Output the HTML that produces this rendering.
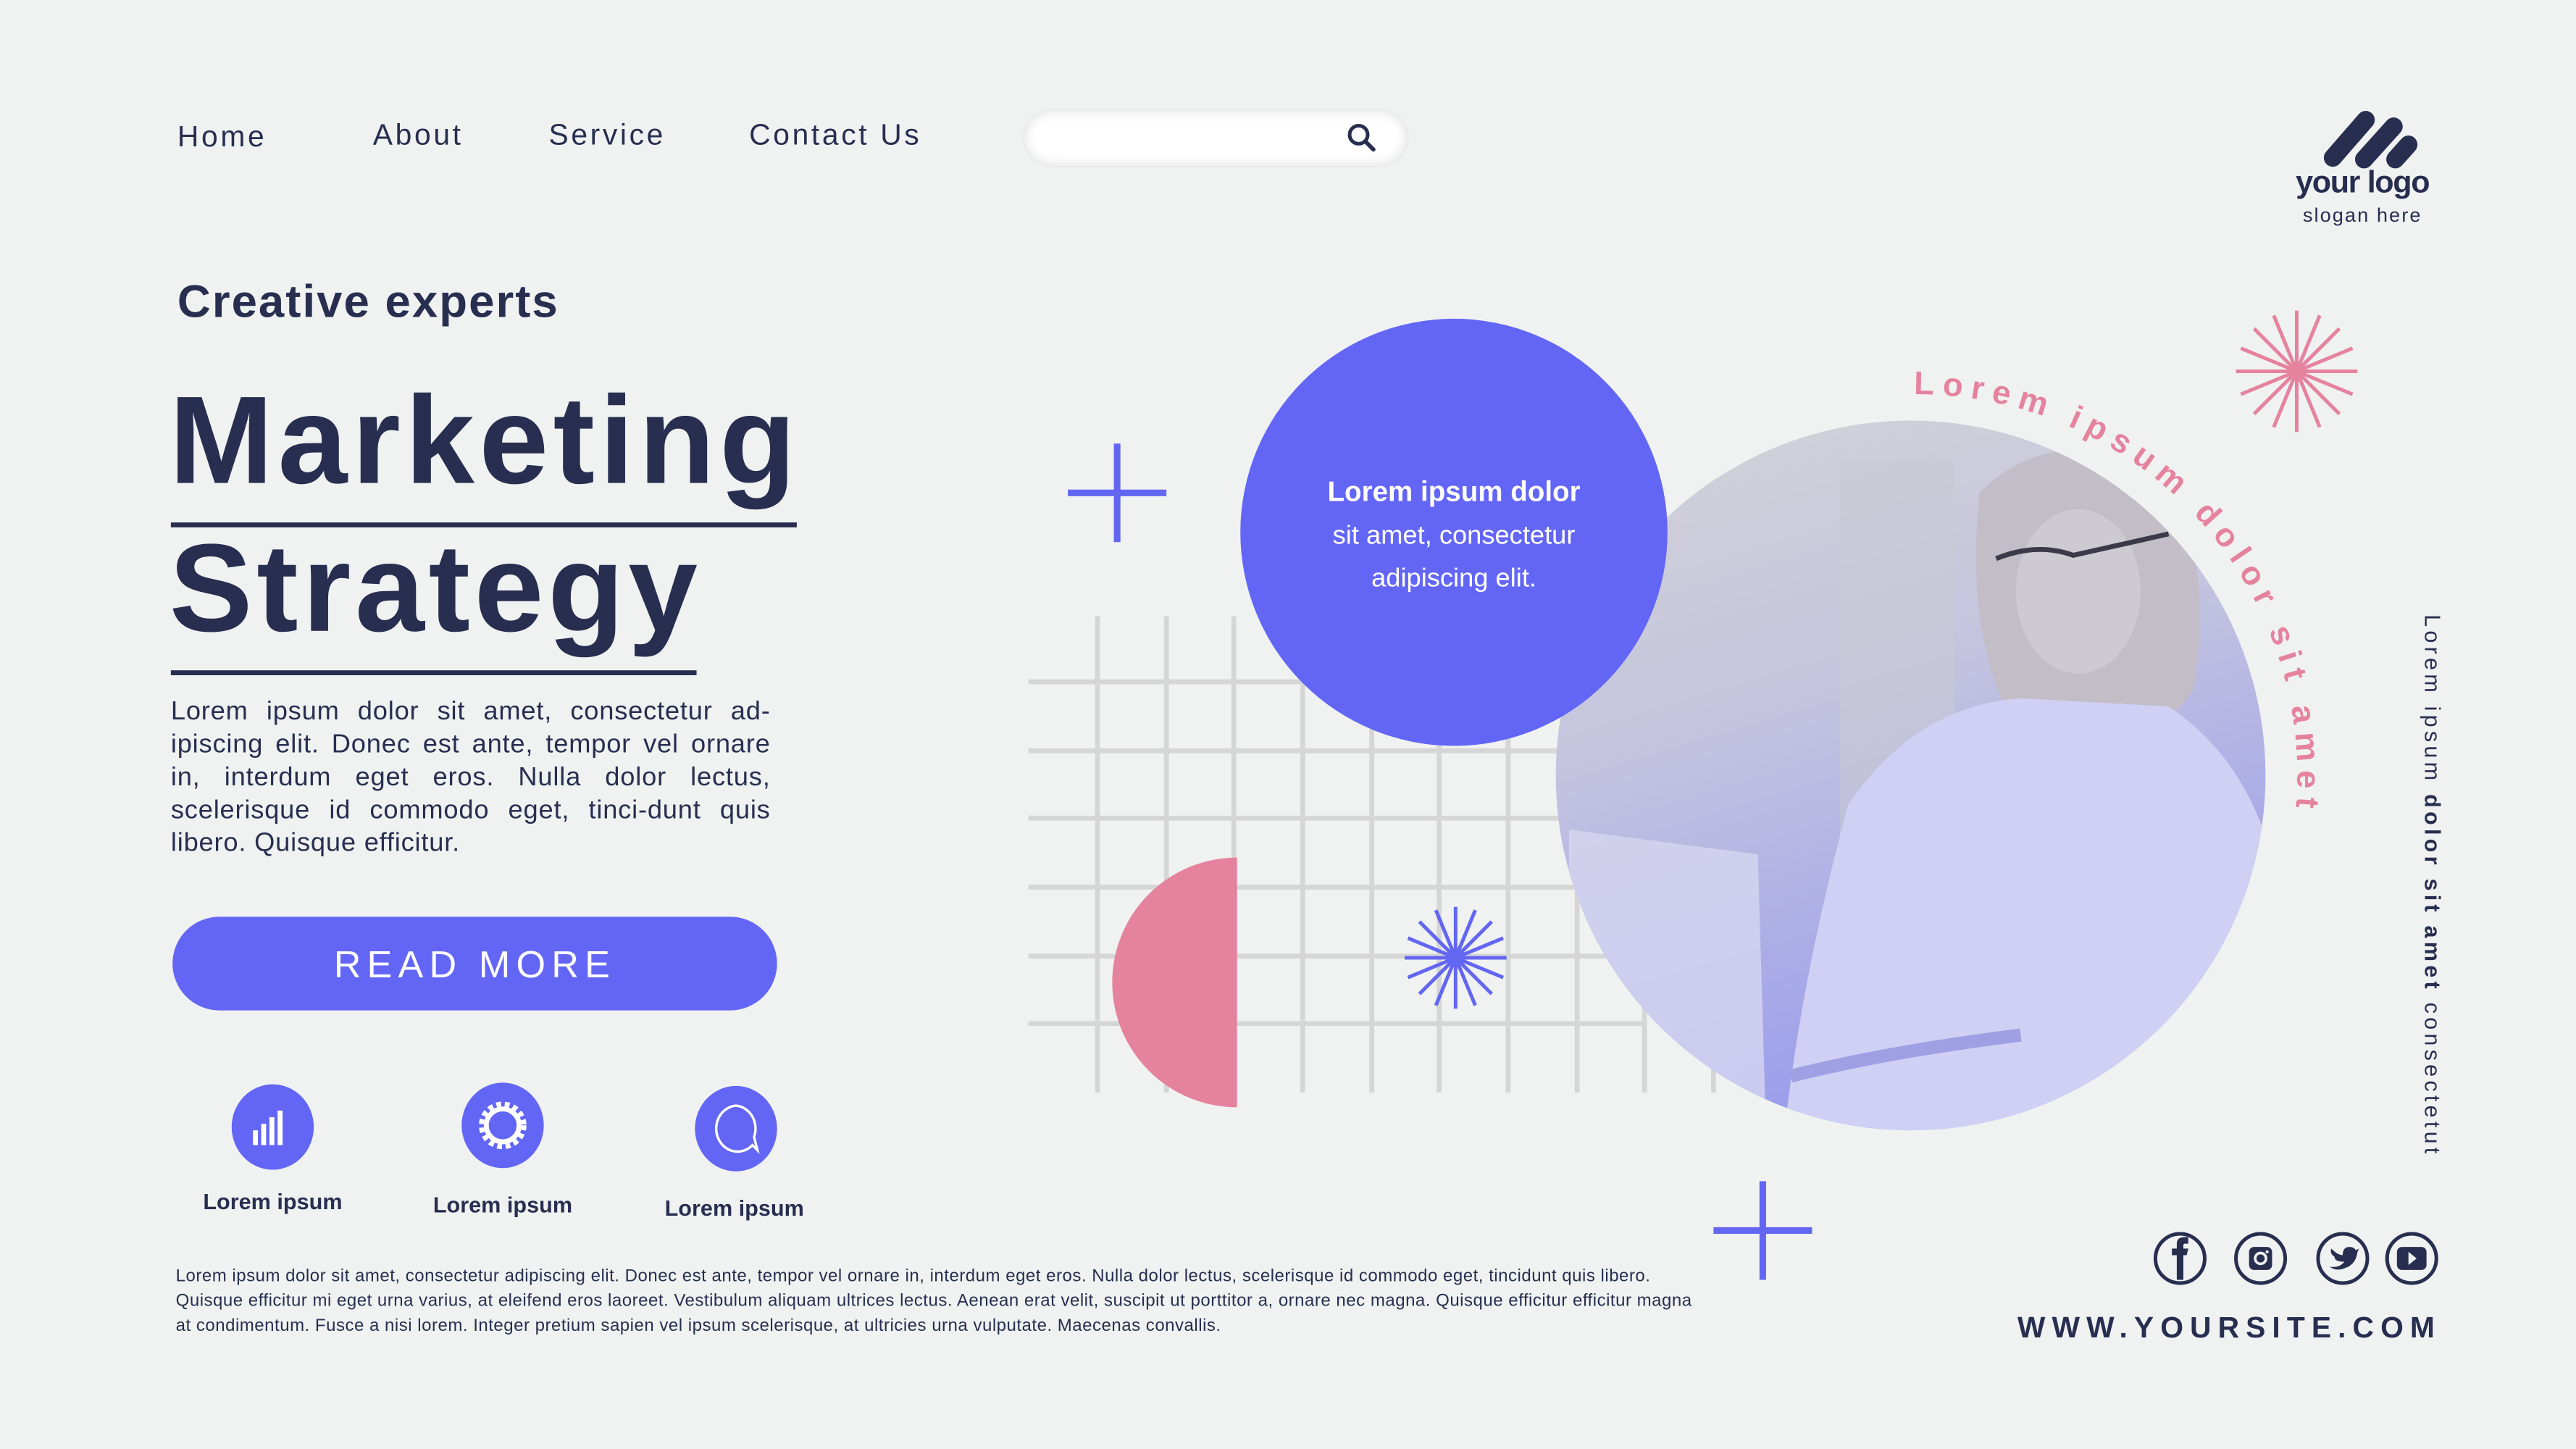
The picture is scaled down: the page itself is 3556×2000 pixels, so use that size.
<!DOCTYPE html>
<html><head><meta charset="utf-8"><style>
html,body{margin:0;padding:0;background:#f0f2f1;}
body{width:3556px;height:2000px;overflow:hidden;}
#w{position:absolute;left:0;top:0;width:1568px;height:882px;transform:scale(2.26786,2.2676);transform-origin:0 0;font-family:"Liberation Sans","DejaVu Sans",sans-serif;color:#282e50;}
.a{position:absolute;white-space:nowrap;}
.nav{font-size:18px;letter-spacing:1.6px;top:72px;}
</style></head><body><div id="w">
<svg class="a" style="left:0;top:0" width="1568" height="882" viewBox="0 0 1568 882">
<defs>
<linearGradient id="pg" x1="0" y1="0" x2="0.3" y2="1"><stop offset="0" stop-color="#d4d4d7"/><stop offset="0.45" stop-color="#c4c4df"/><stop offset="1" stop-color="#9a9cec"/></linearGradient>
<clipPath id="cc"><circle cx="1163" cy="472" r="216"/></clipPath>
<path id="arc" d="M 1165 240 A 232 232 0 0 1 1396 505"/>
</defs>
<g stroke="#d6d6d6" stroke-width="3">
<line x1="626" y1="415" x2="1000" y2="415"/><line x1="626" y1="457" x2="1000" y2="457"/><line x1="626" y1="498" x2="1000" y2="498"/><line x1="626" y1="540" x2="1000" y2="540"/><line x1="626" y1="582" x2="1000" y2="582"/><line x1="626" y1="623" x2="1000" y2="623"/>
<line x1="668" y1="375" x2="668" y2="665"/><line x1="710" y1="375" x2="710" y2="665"/><line x1="751" y1="375" x2="751" y2="665"/><line x1="793" y1="375" x2="793" y2="665"/><line x1="835" y1="375" x2="835" y2="665"/><line x1="876" y1="375" x2="876" y2="665"/><line x1="918" y1="375" x2="918" y2="665"/><line x1="960" y1="375" x2="960" y2="665"/><line x1="1001" y1="375" x2="1001" y2="665"/><line x1="1043" y1="600" x2="1043" y2="665"/>
</g>
<path d="M753 522 A76 76 0 0 0 753 674 Z" fill="#e5839f"/>
<g stroke="#6366f1" stroke-width="4"><line x1="650" y1="300" x2="710" y2="300"/><line x1="680" y1="270" x2="680" y2="330"/>
<line x1="1043" y1="749" x2="1103" y2="749"/><line x1="1073" y1="719" x2="1073" y2="779"/></g>
<circle cx="1163" cy="472" r="216" fill="url(#pg)"/>
<g clip-path="url(#cc)">
<rect x="1120" y="280" width="70" height="260" fill="#cacad4" opacity="0.5"/>
<path d="M955 505 L1070 520 L1075 690 L955 690 Z" fill="#d6d6f0" opacity="0.8"/>
<path d="M1205 300 Q1250 255 1310 290 Q1350 330 1335 420 Q1300 470 1230 450 Q1195 390 1205 300Z" fill="#c2bdc6"/>
<path d="M1125 490 Q1165 430 1230 425 L1320 430 Q1380 470 1390 560 L1390 700 L1085 700 Q1095 600 1125 490Z" fill="#cfd0f3"/>
<ellipse cx="1265" cy="360" rx="38" ry="50" fill="#cdcad2"/>
<path d="M1215 340 Q1240 330 1262 338 L1320 325" stroke="#3a3a4a" stroke-width="3" fill="none"/>
<path d="M1090 655 Q1150 640 1230 630" stroke="#9fa0e4" stroke-width="8" fill="none"/>
</g>
<circle cx="885" cy="324" r="130" fill="#6366f5"/>
<text font-family="Liberation Sans,sans-serif" font-weight="bold" font-size="20" fill="#e5839f"><textPath href="#arc" textLength="385" lengthAdjust="spacing">Lorem ipsum dolor sit amet</textPath></text>
<g stroke="#6366f1" stroke-width="2.2" transform="translate(886,583)">
<line x1="-31" y1="0" x2="31" y2="0"/><line x1="0" y1="-31" x2="0" y2="31"/><line x1="-22" y1="-22" x2="22" y2="22"/><line x1="-22" y1="22" x2="22" y2="-22"/><line x1="-12" y1="-29" x2="12" y2="29"/><line x1="12" y1="-29" x2="-12" y2="29"/><line x1="-29" y1="-12" x2="29" y2="12"/><line x1="-29" y1="12" x2="29" y2="-12"/></g>
<g stroke="#e5839f" stroke-width="2.2" transform="translate(1398,226)">
<line x1="-37" y1="0" x2="37" y2="0"/><line x1="0" y1="-37" x2="0" y2="37"/><line x1="-26" y1="-26" x2="26" y2="26"/><line x1="-26" y1="26" x2="26" y2="-26"/><line x1="-14" y1="-34" x2="14" y2="34"/><line x1="14" y1="-34" x2="-14" y2="34"/><line x1="-34" y1="-14" x2="34" y2="14"/><line x1="-34" y1="14" x2="34" y2="-14"/></g>
<g stroke="#282e50" stroke-width="11" stroke-linecap="round"><line x1="1420" y1="96" x2="1440" y2="73"/><line x1="1439" y1="97" x2="1457" y2="77"/><line x1="1458" y1="97" x2="1466" y2="88"/></g>
<circle cx="827" cy="82" r="5.5" stroke="#282e50" stroke-width="2.2" fill="none"/><line x1="831" y1="86" x2="836" y2="91" stroke="#282e50" stroke-width="2.5" stroke-linecap="round"/>
<ellipse cx="166" cy="686" rx="25" ry="26" fill="#6366f5"/>
<g fill="#fff"><rect x="154" y="688" width="3" height="9"/><rect x="159" y="684" width="3" height="13"/><rect x="164" y="680" width="3" height="17"/><rect x="169" y="676" width="3" height="21"/></g>
<ellipse cx="306" cy="685" rx="25" ry="26" fill="#6366f5"/>
<circle cx="306" cy="685" r="13" fill="none" stroke="#fff" stroke-width="3" stroke-dasharray="3 2.2"/><circle cx="306" cy="685" r="10" fill="none" stroke="#fff" stroke-width="3"/>
<ellipse cx="448" cy="687" rx="25" ry="26" fill="#6366f5"/>
<path d="M448 673 A13 14 0 1 0 458 697 L461 700 L459 692 A13 14 0 0 0 448 673Z" fill="none" stroke="#fff" stroke-width="1.5"/>
<g fill="none" stroke="#282e50" stroke-width="2.2"><circle cx="1327" cy="766" r="15"/><circle cx="1376" cy="766" r="15"/><circle cx="1426" cy="766" r="15"/><circle cx="1468" cy="766" r="15"/></g>
<path d="M1325 779 V764 H1322 V760 H1325 V757 Q1325 753 1330 753 H1332 V757 H1330 Q1329 757 1329 758 V760 H1332 L1331 764 H1329 V779Z" fill="#282e50"/>
<rect x="1369" y="759" width="14" height="14" rx="3" fill="#282e50"/><circle cx="1376" cy="766" r="3.3" fill="none" stroke="#f0f2f1" stroke-width="1.6"/><circle cx="1380" cy="762" r="0.9" fill="#f0f2f1"/>
<path d="M1418 771 Q1424 772 1427 768 Q1421 768 1421 765 Q1418 763 1419 760 Q1423 764 1426 764 Q1426 759 1430 759 Q1433 759 1434 761 L1436 760 L1435 762 Q1434 770 1427 772 Q1422 774 1418 771Z" fill="#282e50"/>
<rect x="1459" y="759" width="18" height="14" rx="3" fill="#282e50"/><path d="M1466 762 L1471 766 L1466 770Z" fill="#f0f2f1"/>
<rect x="104" y="318" width="381" height="3" fill="#282e50"/><rect x="104" y="408" width="320" height="3" fill="#282e50"/>
</svg>
<div class="a nav" style="left:108px;top:73px">Home</div>
<div class="a nav" style="left:227px">About</div>
<div class="a nav" style="left:334px">Service</div>
<div class="a nav" style="left:456px">Contact Us</div>
<div class="a" style="left:623px;top:67px;width:234px;height:34px;border-radius:17px;background:#fff;box-shadow:inset 0 0 8px rgba(0,0,0,0.14),0 0 1px rgba(0,0,0,0.1);z-index:-1"></div>
<div class="a" style="left:1393px;top:101px;width:90px;text-align:center;font-weight:bold;font-size:19px;letter-spacing:-0.6px">your logo</div>
<div class="a" style="left:1393px;top:124px;width:90px;text-align:center;font-size:12px;letter-spacing:0.9px">slogan here</div>
<div class="a" style="left:108px;top:168px;font-weight:bold;font-size:28px;letter-spacing:0.9px">Creative experts</div>
<div class="a" style="left:103px;top:224px;font-weight:bold;font-size:76px;letter-spacing:2.8px;line-height:90px">Marketing</div>
<div class="a" style="left:103px;top:314px;font-weight:bold;font-size:76px;letter-spacing:2.5px;line-height:90px">Strategy</div>
<div class="a" style="left:104px;top:424px;width:365px;white-space:normal;font-size:16px;letter-spacing:0.35px;line-height:20px;text-align:justify">Lorem ipsum dolor sit amet, consectetur ad-ipiscing elit. Donec est ante, tempor vel ornare in, interdum eget eros. Nulla dolor lectus, scelerisque id commodo eget, tinci-dunt quis libero. Quisque efficitur.</div>
<div class="a" style="left:105px;top:558px;width:368px;height:57px;border-radius:29px;background:#6366f5;color:#fff;font-size:23px;letter-spacing:3.6px;text-align:center;line-height:58px">READ MORE</div>
<div class="a" style="left:106px;top:724px;width:120px;text-align:center;font-weight:bold;font-size:13.5px">Lorem ipsum</div>
<div class="a" style="left:246px;top:726px;width:120px;text-align:center;font-weight:bold;font-size:13.5px">Lorem ipsum</div>
<div class="a" style="left:387px;top:728px;width:120px;text-align:center;font-weight:bold;font-size:13.5px">Lorem ipsum</div>
<div class="a" style="left:107px;top:770px;width:935px;white-space:normal;font-size:10.6px;letter-spacing:0.22px;line-height:14.8px">Lorem ipsum dolor sit amet, consectetur adipiscing elit. Donec est ante, tempor vel ornare in, interdum eget eros. Nulla dolor lectus, scelerisque id commodo eget, tincidunt quis libero. Quisque efficitur mi eget urna varius, at eleifend eros laoreet. Vestibulum aliquam ultrices lectus. Aenean erat velit, suscipit ut porttitor a, ornare nec magna. Quisque efficitur efficitur magna at condimentum. Fusce a nisi lorem. Integer pretium sapien vel ipsum scelerisque, at ultricies urna vulputate. Maecenas convallis.</div>
<div class="a" style="left:755px;top:287px;width:260px;text-align:center;color:#fff;font-size:16px;line-height:26px"><b style="font-size:17px">Lorem ipsum dolor</b><br>sit amet, consectetur<br>adipiscing elit.</div>
<div class="a" style="left:1488px;top:374px;transform-origin:0 0;transform:rotate(90deg);font-size:13.5px;letter-spacing:2.3px">Lorem ipsum <b>dolor sit amet</b> consectetut</div>
<div class="a" style="left:1228px;top:798px;font-weight:bold;font-size:18px;letter-spacing:4px">WWW.YOURSITE.COM</div>
</div></body></html>
